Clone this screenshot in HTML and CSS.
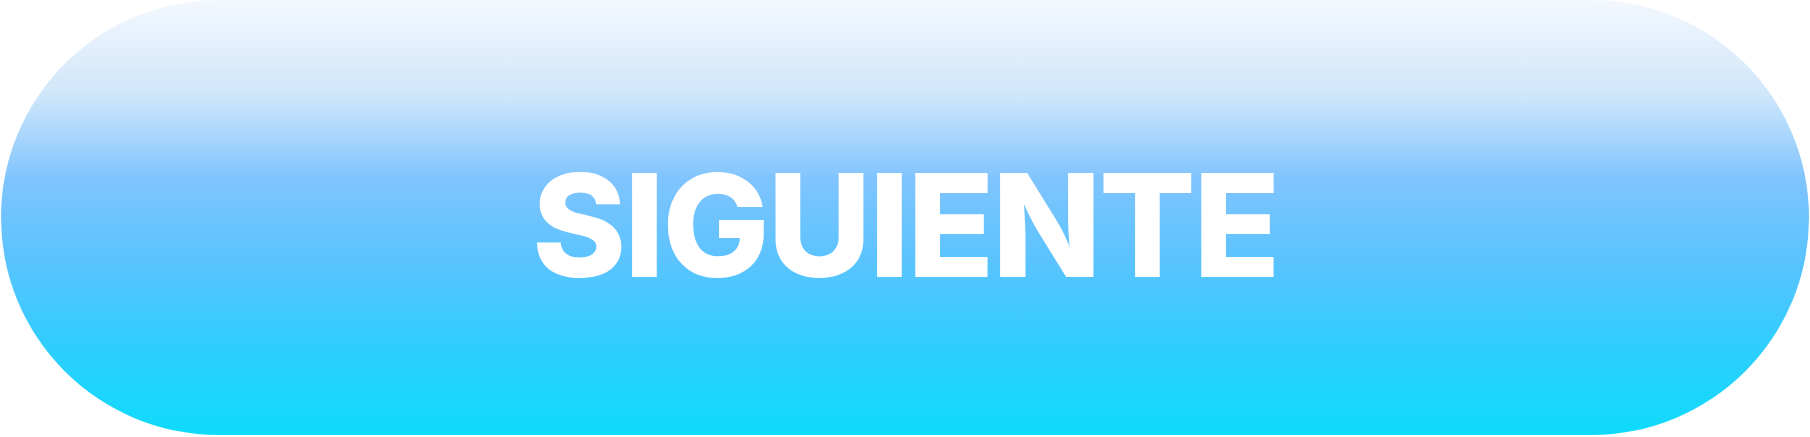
FILE: index.html
```html
<!DOCTYPE html>
<html lang="es">
<head>
<meta charset="utf-8">
<title>Siguiente</title>
<link rel="stylesheet" href="styles.css">
</head>
<body>
<div class="page">
  <button class="next-btn" type="button"><span class="label">SIGUIENTE</span></button>
</div>
</body>
</html>
```

FILE: styles.css
```css
html, body {
  margin: 0;
  padding: 0;
  background: #ffffff;
}

.page {
  display: flex;
  padding: 0 1px;
}

.next-btn {
  display: flex;
  align-items: center;
  justify-content: center;
  width: 1808px;
  height: 435px;
  border: none;
  margin: 0;
  padding: 14px 0 0 0;
  border-radius: 218px;
  background: linear-gradient(180deg, #f4f8fe 0%, #cfe6fa 22%, #80c4fe 41%, #5ac3fe 60%, #2ecefe 80%, #0edbfc 100%);
  cursor: pointer;
}

.label {
  font-family: "Inter", "Liberation Sans", sans-serif;
  font-weight: 800;
  font-size: 143px;
  line-height: 1;
  color: #ffffff;
  letter-spacing: -2.5px;
}
```
